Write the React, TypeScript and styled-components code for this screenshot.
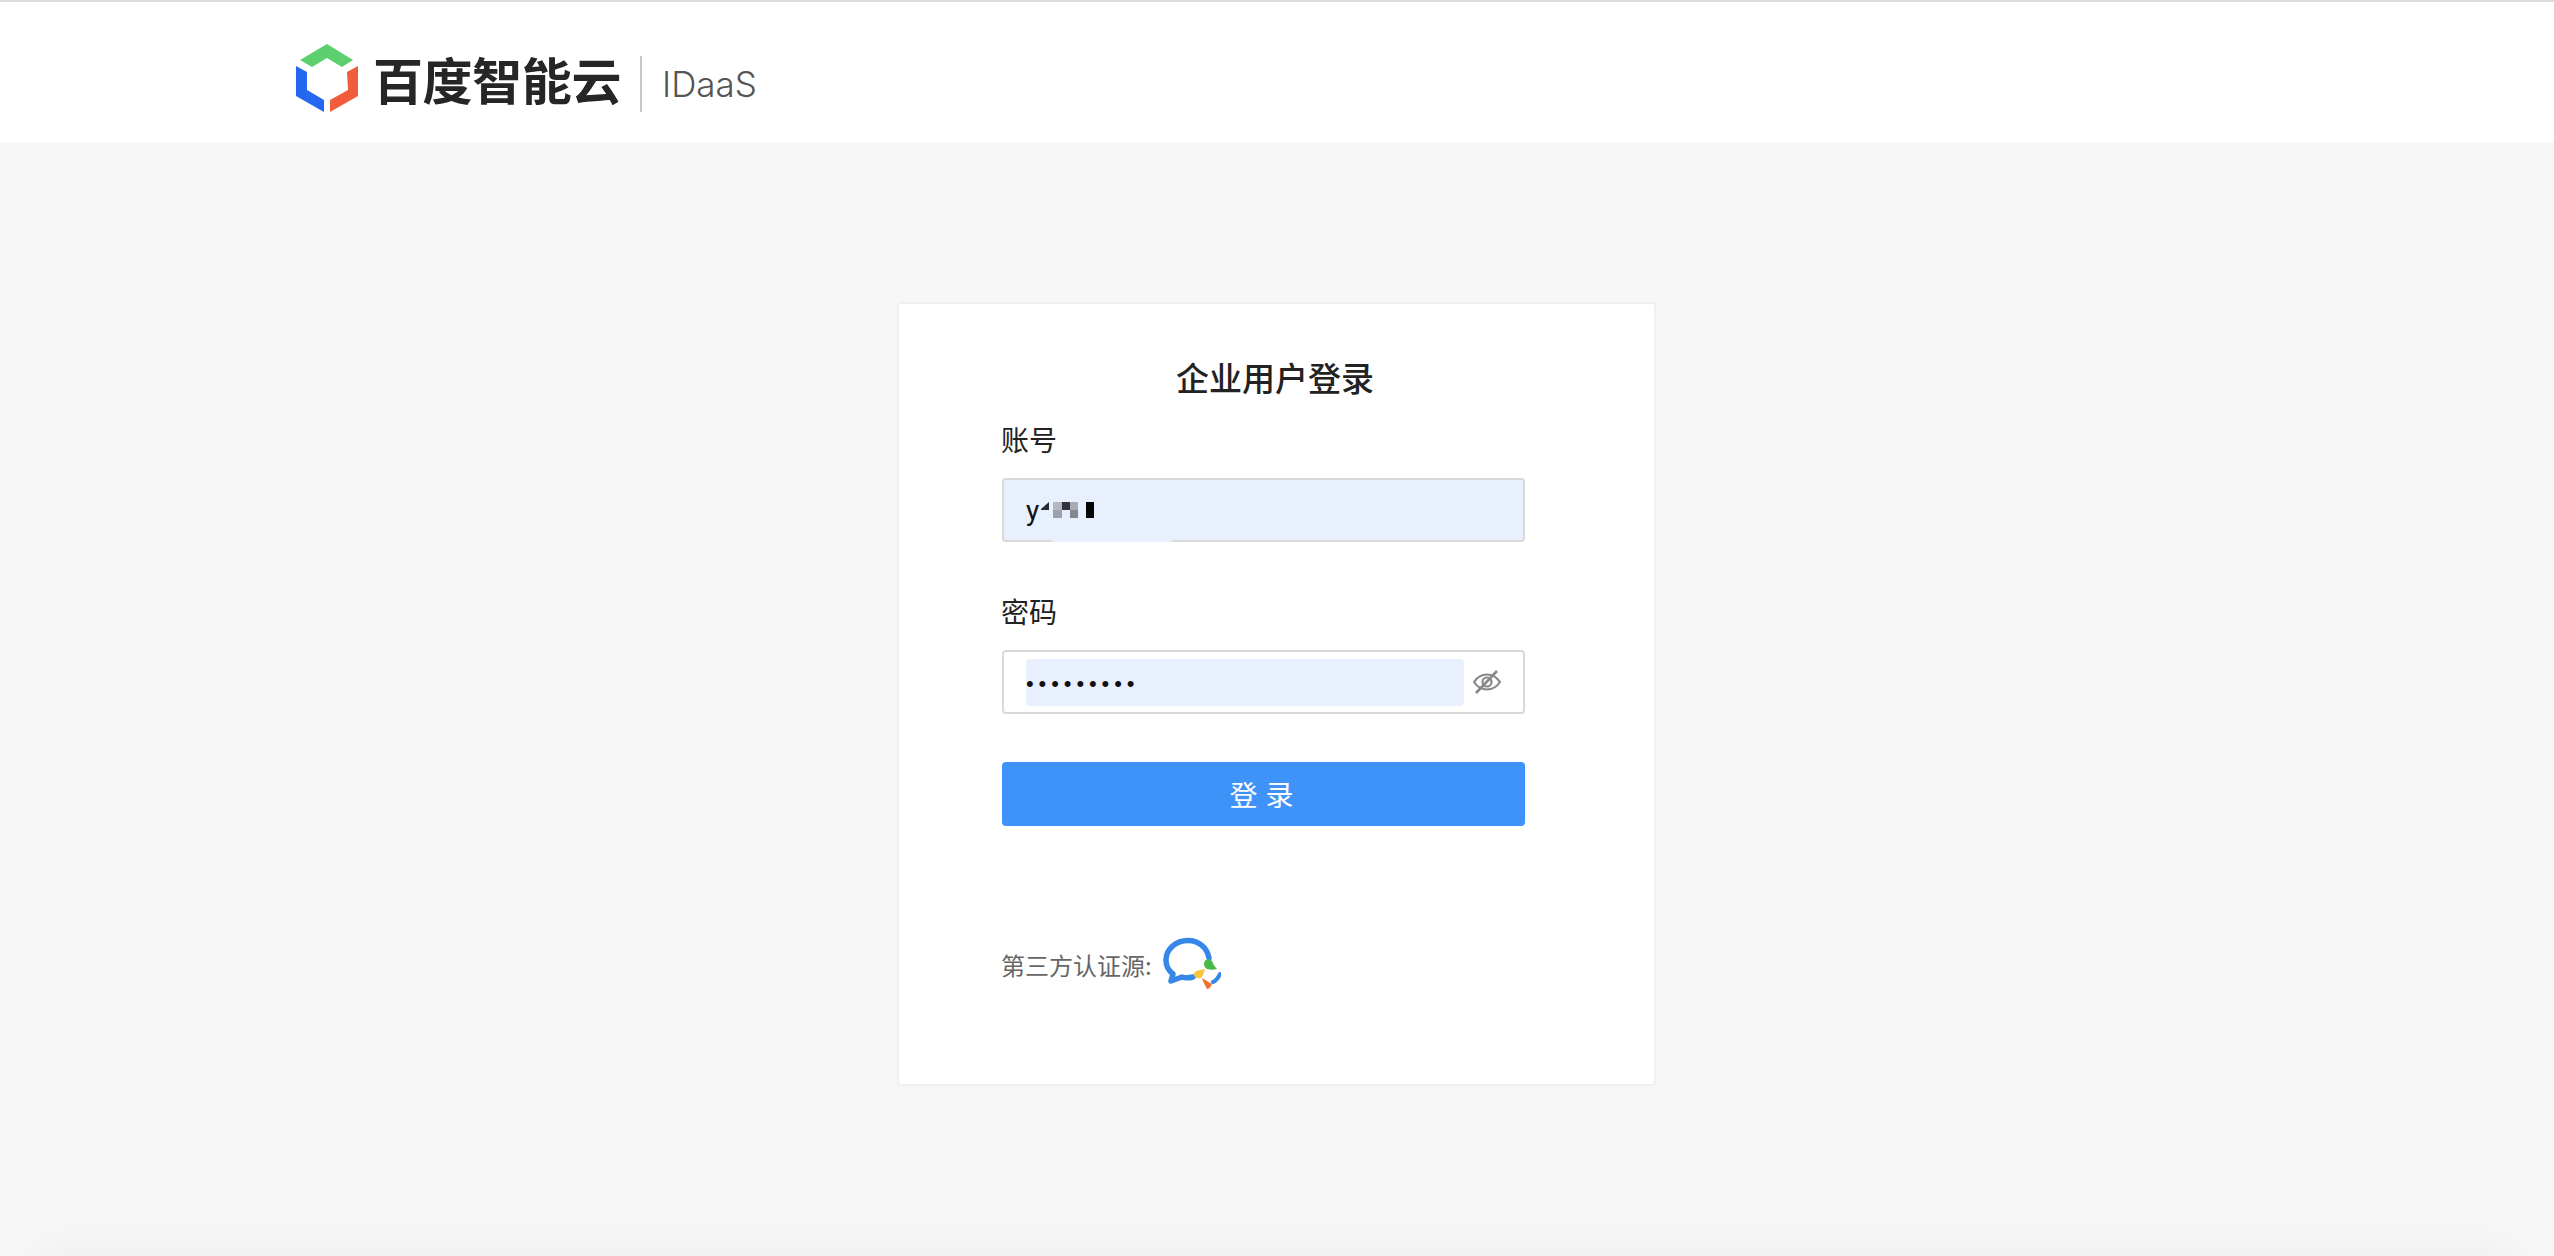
import styled, { createGlobalStyle } from "styled-components";

const GlobalStyle = createGlobalStyle`
  html, body {
    margin: 0;
    padding: 0;
    height: 100%;
    overflow: hidden;
    background: #f7f7f7;
    font-family: Inter, "Noto Sans CJK SC", sans-serif;
  }
`;

const Page = styled.div`
  position: relative;
  height: 1256px;
  overflow: hidden;
  display: flex;
  flex-direction: column;
  background: #f7f7f7;
`;

const Header = styled.header`
  box-sizing: border-box;
  height: 142px;
  flex-shrink: 0;
  background: #fff;
  border-top: 2px solid #dcdce0;
  padding: 12px 0 0 296px;
  display: flex;
  align-items: center;
  gap: 15px;
`;

const BrandName = styled.span`
  font-family: "Noto Sans CJK SC", sans-serif;
  font-size: 50px;
  font-weight: 700;
  line-height: 60px;
  color: #262626;
  letter-spacing: -0.4px;
  white-space: nowrap;
`;

const Divider = styled.span`
  width: 2px;
  height: 56px;
  margin: 11px 6px 0 4px;
  background: #c8c8c8;
`;

const Product = styled.span`
  margin: 11px 0 0 -1px;
  font-size: 35px;
  font-weight: 300;
  color: #555;
`;

const Main = styled.main`
  flex: 1;
  display: flex;
  justify-content: center;
  padding: 160px 1px 0 0;
`;

const Card = styled.section`
  box-sizing: border-box;
  width: 759px;
  height: 784px;
  background: #fff;
  border: 2px solid #f0f0f0;
  border-radius: 4px;
  display: flex;
  flex-direction: column;
  padding-top: 53px;
`;

const Title = styled.h1`
  margin: 0 0 22px;
  padding-right: 3px;
  text-align: center;
  font-family: "Noto Sans CJK SC", sans-serif;
  font-size: 33px;
  font-weight: 500;
  line-height: 40px;
  color: #222;
`;

const Form = styled.form`
  width: 523px;
  margin-left: 103px;
  display: flex;
  flex-direction: column;
`;

const Label = styled.label`
  margin-left: -1px;
  font-family: "Noto Sans CJK SC", sans-serif;
  font-size: 28px;
  font-weight: 400;
  line-height: 40px;
  color: #222;
  margin-bottom: 19px;
`;

const Field = styled.div<{ $filled?: boolean }>`
  box-sizing: border-box;
  position: relative;
  height: 64px;
  margin-bottom: 49px;
  padding: 0 22px 0 22px;
  display: flex;
  align-items: center;
  gap: 9px;
  border: 2px solid #d9d9d9;
  border-radius: 4px;
  background: ${(p) => (p.$filled ? "#e8f0fe" : "#fff")};
`;

const TextInput = styled.input`
  flex: 1;
  min-width: 0;
  height: 44px;
  padding: 0;
  border: 0;
  outline: 0;
  border-radius: 4px;
  background: #e8f0fe;
  color: #111;
  font-family: Roboto, sans-serif;
  font-size: 28px;
`;

const PasswordInput = styled(TextInput)`
  font-family: "Liberation Sans", sans-serif;
  font-size: 22px;
  letter-spacing: 4.9px;
  padding-top: 3px;
`;

const Masked = styled.svg`
  position: absolute;
  left: 37px;
  top: 22px;
`;

const FillBump = styled.span`
  position: absolute;
  left: 47px;
  right: 350px;
  bottom: -2px;
  height: 2px;
  border-radius: 0 0 4px 4px;
  background: #e8f0fe;
`;

const SubmitButton = styled.button`
  height: 64px;
  margin-top: -1px;
  padding-left: 10px;
  border: 0;
  border-radius: 4px;
  background: #3f92f8;
  color: #fff;
  font-family: "Noto Sans CJK SC", sans-serif;
  font-size: 28px;
  letter-spacing: 8px;
`;

const ThirdParty = styled.div`
  margin: 111px 0 0 -1px;
  display: flex;
  align-items: center;
  gap: 11px;
  font-family: "Noto Sans CJK SC", sans-serif;
  font-size: 24px;
  color: #666;
`;

const BottomGlow = styled.div`
  position: absolute;
  left: 40px;
  right: 40px;
  top: 100%;
  height: 40px;
  box-shadow: 0 0 50px rgba(0, 0, 0, 0.06);
`;

function CloudMark() {
  return (
    <svg width="62" height="69" viewBox="0 0 62 69">
      <path fill="#5ccf6e" d="M31 0 57 16 46 23 31 14 16 23 4 16Z" />
      <path fill="#2468f2" d="M0 22 11 28V46L28 56V68L0 52Z" />
      <path fill="#f15d3b" d="M62 22V52L34 68V56L52 46 51 28Z" />
    </svg>
  );
}

function EyeOff() {
  return (
    <svg width="28" height="24" viewBox="0 0 28 24" fill="none" stroke="#888" strokeWidth="2.2">
      <path d="M1 12C5 6 9 4.5 14 4.5S23 6 27 12C23 18 19 19.5 14 19.5S5 18 1 12Z" />
      <path d="M9.5 12a4.5 4.5 0 0 1 9 0 4.5 4.5 0 0 1-9 0Z" />
      <path d="M24 1 3 23" strokeWidth="2.6" />
    </svg>
  );
}

function WeComMark() {
  return (
    <svg width="58" height="54" viewBox="0 0 58 54" fill="none">
      <path
        stroke="#3787e8"
        strokeWidth="5.5"
        strokeLinecap="round"
        strokeLinejoin="round"
        d="M46 21C44 10 35 3.500 25 3.500 13 3.500 3 12 3 23 3 29 6 34 10 37L8 44 19 40C22 41 26 41 30 40"
      />
      <path fill="#4cb848" d="M41 27a4.500 4.500 0 0 1 8-3c1 3 3 6 5 8-3 1-7 1-10 0-2-1-3-3-3-5Z" />
      <path fill="#f7c83c" d="M31 37c0-3 5-4 11-5-1 4-2 7-4 9-3 1-7 0-7-4Z" />
      <path fill="#ee7330" d="M39 41 49 47C48 50 46 52 44 52 42 48 40 45 39 41Z" />
      <path stroke="#3787e8" strokeWidth="4" strokeLinecap="round" d="M50 45C53 44 55 41 57 37" />
    </svg>
  );
}

export default function App() {
  return (
    <>
      <GlobalStyle />
      <Page>
        <Header>
          <CloudMark />
          <BrandName>百度智能云</BrandName>
          <Divider />
          <Product>IDaaS</Product>
        </Header>
        <Main>
          <Card>
            <Title>企业用户登录</Title>
            <Form>
              <Label>账号</Label>
              <Field $filled>
                <TextInput readOnly value="y" />
                <Masked width="54" height="18" viewBox="0 0 54 18">
                  <path fill="#2a2a2e" d="M0 7 8 0V8H0Z" />
                  <rect x="12" width="9" height="8" fill="#b5b8c0" />
                  <rect x="12" y="8" width="9" height="8" fill="#9ea1ab" />
                  <rect x="21" width="8" height="8" fill="#33343a" />
                  <rect x="29" width="8" height="8" fill="#a9acb4" />
                  <rect x="29" y="8" width="8" height="8" fill="#85888f" />
                  <rect x="45" width="8" height="16" fill="#050505" />
                </Masked>
                <FillBump />
              </Field>
              <Label>密码</Label>
              <Field>
                <PasswordInput readOnly type="password" value="123456789" />
                <EyeOff />
              </Field>
              <SubmitButton type="button">登录</SubmitButton>
              <ThirdParty>
                第三方认证源:
                <WeComMark />
              </ThirdParty>
            </Form>
          </Card>
        </Main>
        <BottomGlow />
      </Page>
    </>
  );
}
